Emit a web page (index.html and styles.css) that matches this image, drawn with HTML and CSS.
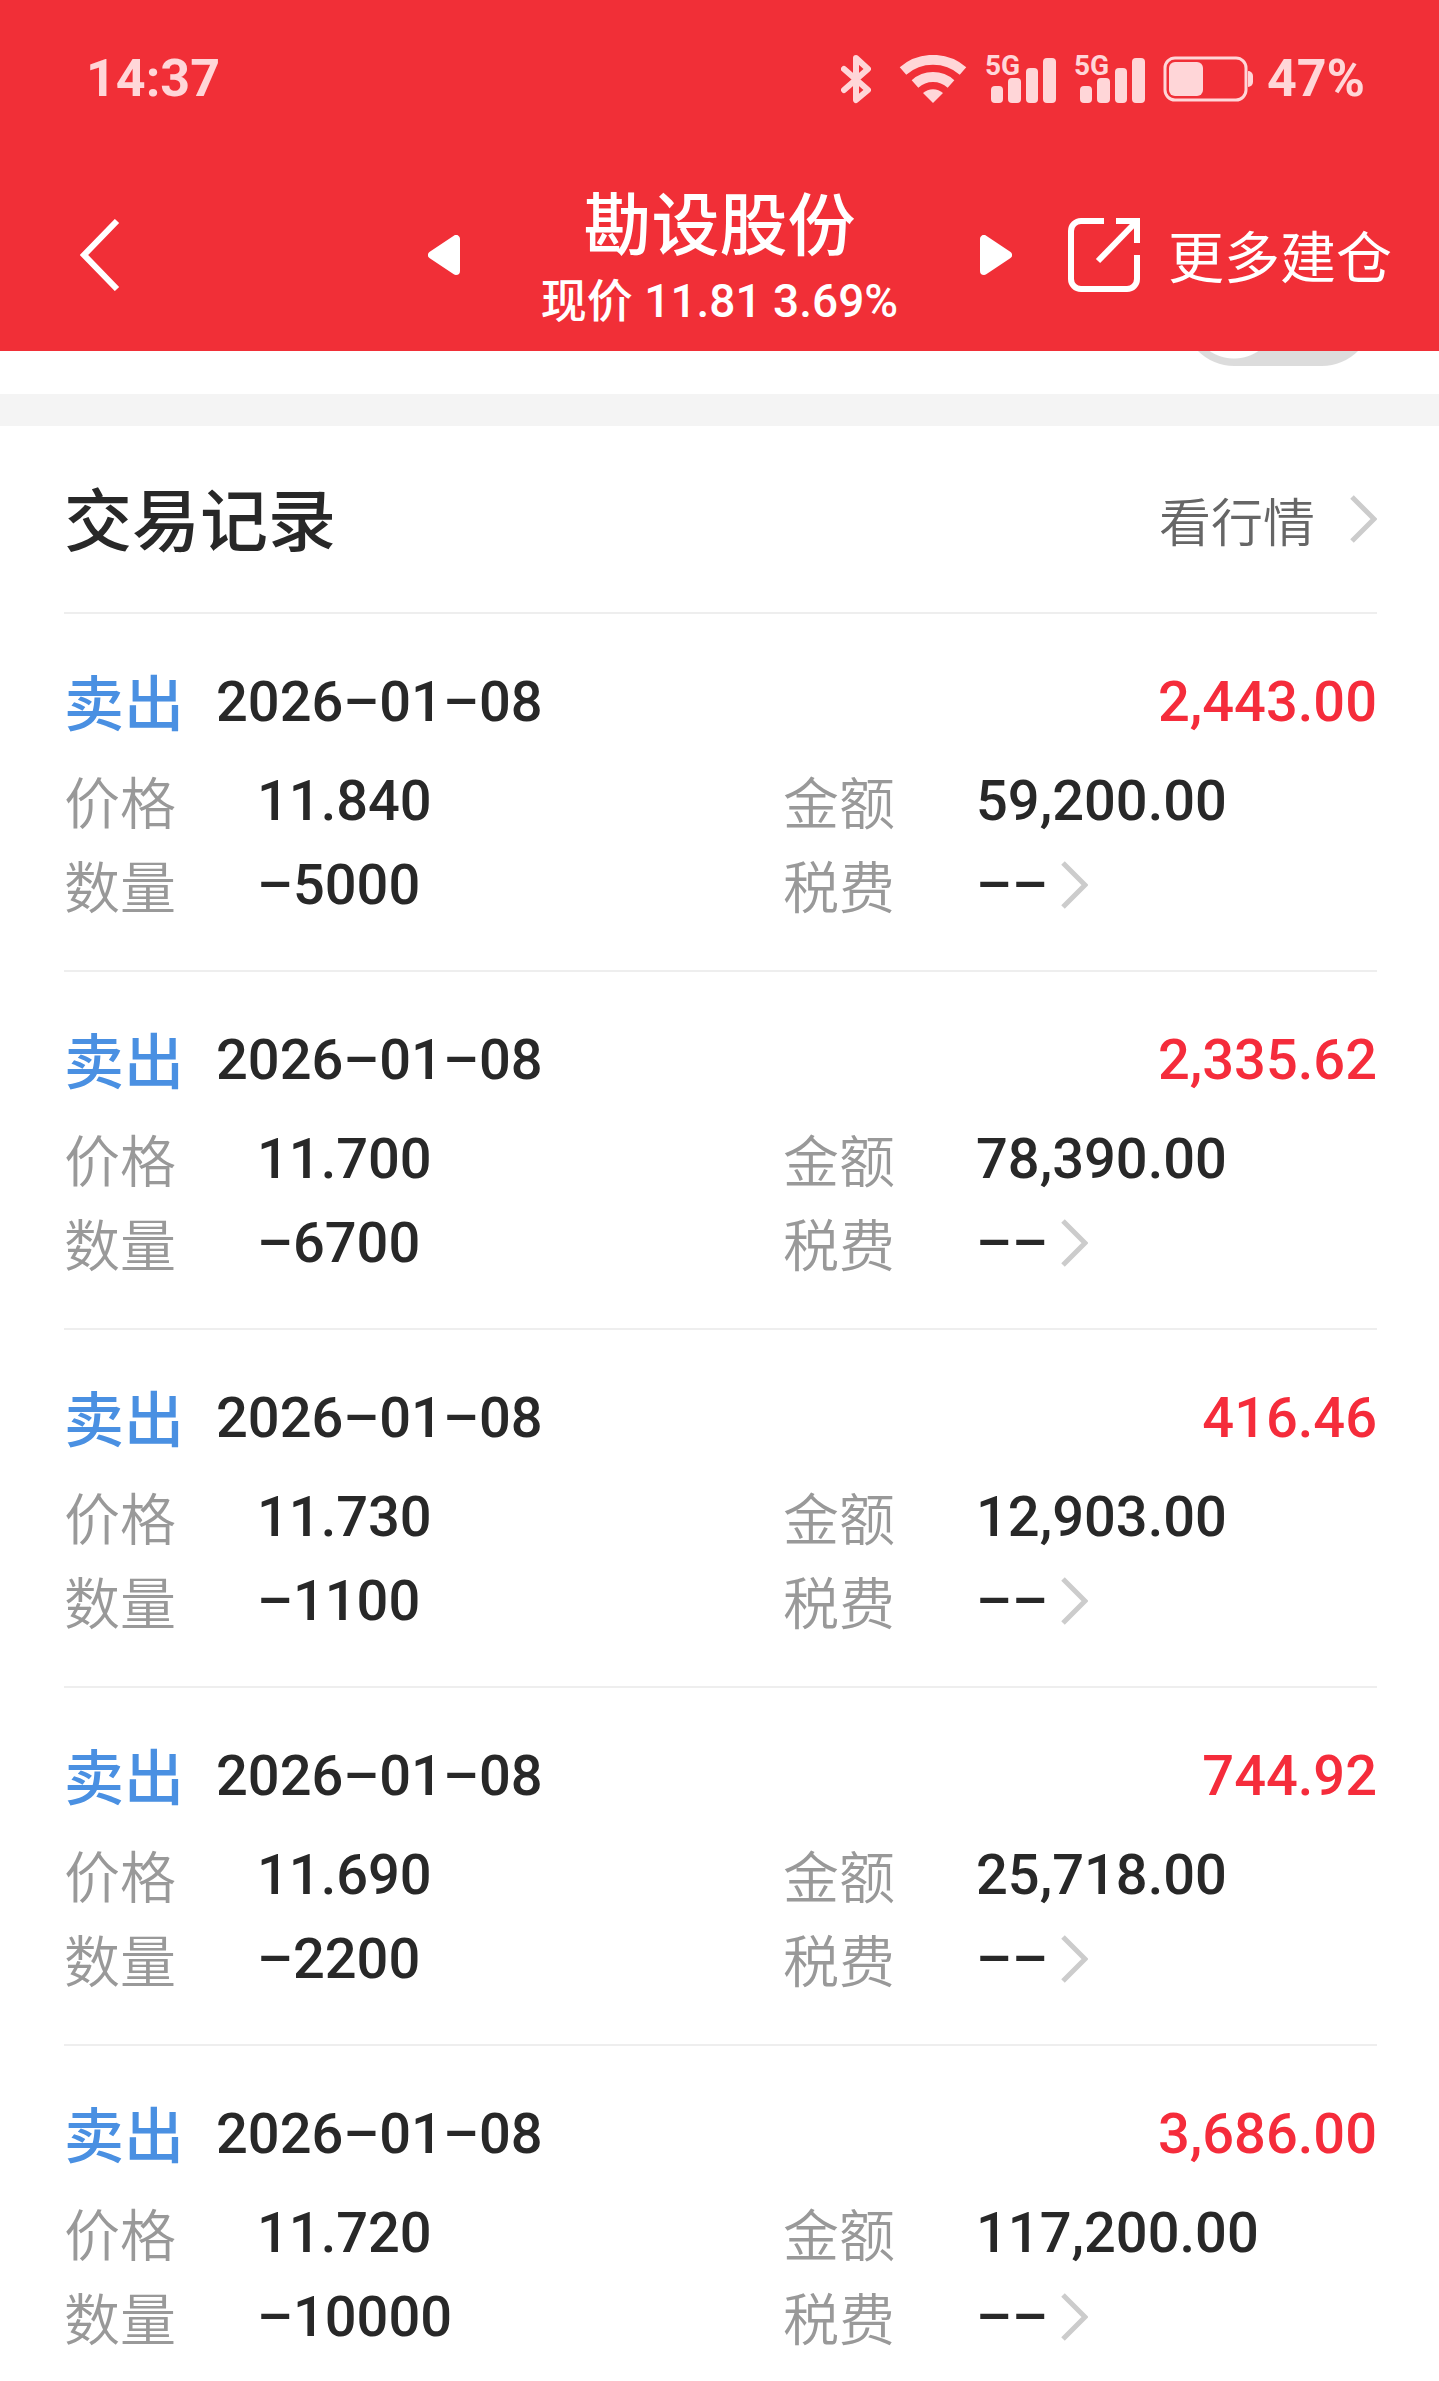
FILE: index.html
```html
<!DOCTYPE html>
<html lang="zh-CN">
<head>
  <meta charset="UTF-8" />
  <meta name="viewport" content="width=device-width, initial-scale=1.0" />
  <title>勘设股份</title>
  <link rel="stylesheet" href="styles.css">
</head>
<body>

  <header>
    <div class="status-bar">
      <span class="clock">14:37</span>
      <div class="status-icons">
        <svg class="bluetooth" viewBox="0 0 30 50" width="30" height="50">
          <path d="M3 15 L27 36 L15 46 V4 L27 15 L3 36" />
        </svg>
        <svg class="wifi" viewBox="0 0 68 48" width="68" height="48">
          <path d="M4 16 A46 46 0 0 1 64 16" />
          <path d="M16 29 A27 27 0 0 1 52 29" />
          <path class="dot" d="M34 48 L24 38 A15 15 0 0 1 44 38 Z" />
        </svg>
        <svg class="signal" viewBox="0 -8 71 66" width="71" height="66">
          <text x="0" y="21">5G</text>
          <rect x="6" y="32" width="12" height="17" rx="4" />
          <rect x="23" y="24" width="13" height="25" rx="4" />
          <rect x="41" y="14" width="12" height="35" rx="4" />
          <rect x="58" y="4" width="13" height="45" rx="4" />
        </svg>
        <svg class="signal" viewBox="0 -8 71 66" width="71" height="66">
          <text x="0" y="21">5G</text>
          <rect x="6" y="32" width="12" height="17" rx="4" />
          <rect x="23" y="24" width="13" height="25" rx="4" />
          <rect x="41" y="14" width="12" height="35" rx="4" />
          <rect x="58" y="4" width="13" height="45" rx="4" />
        </svg>
        <svg class="battery" viewBox="0 0 90 46" width="90" height="46">
          <rect class="case" x="2" y="2" width="81" height="42" rx="10" />
          <rect x="6" y="6" width="34" height="34" rx="6" />
          <path d="M85 15 A5 5 0 0 1 90 20 V26 A5 5 0 0 1 85 31 Z" />
        </svg>
        <span class="percent">47%</span>
      </div>
    </div>

    <nav class="title-bar">
      <button class="back" aria-label="返回">
        <svg viewBox="0 0 40 72" width="40" height="72"><path d="M37 2 L4 36 L37 70" /></svg>
      </button>
      <div class="switcher">
        <button aria-label="上一只">
          <svg viewBox="0 0 32 40" width="32" height="40"><path d="M28 4 V36 L4 20 Z" /></svg>
        </button>
        <div class="stock">
          <h1>勘设股份</h1>
          <p>现价 11.81 3.69%</p>
        </div>
        <button aria-label="下一只">
          <svg viewBox="0 0 32 40" width="32" height="40"><path d="M4 4 V36 L28 20 Z" /></svg>
        </button>
      </div>
      <a class="more" href="#">
        <svg viewBox="0 0 72 74" width="72" height="74">
          <path d="M36 3 H13 A10 10 0 0 0 3 13 V61 A10 10 0 0 0 13 71 H59 A10 10 0 0 0 69 61 V37" />
          <path d="M48 3 H69 V25" />
          <path d="M30 43 L68 4" />
        </svg>
        <span>更多建仓</span>
      </a>
    </nav>
  </header>

  <div class="toggle-row">
    <input type="checkbox" class="toggle" aria-label="开关">
  </div>

  <main>
    <div class="section-head">
      <h2>交易记录</h2>
      <a href="#">看行情
        <svg class="chevron" viewBox="0 0 28 48" width="28" height="48"><path d="M3 2 L25 24 L3 46" /></svg>
      </a>
    </div>
    <div id="records"></div>
  </main>

  <script>
    const records = [
      { date: "2026–01–08", profit: "2,443.00", price: "11.840", amount: "59,200.00", count: "–5000" },
      { date: "2026–01–08", profit: "2,335.62", price: "11.700", amount: "78,390.00", count: "–6700" },
      { date: "2026–01–08", profit: "416.46", price: "11.730", amount: "12,903.00", count: "–1100" },
      { date: "2026–01–08", profit: "744.92", price: "11.690", amount: "25,718.00", count: "–2200" },
      { date: "2026–01–08", profit: "3,686.00", price: "11.720", amount: "117,200.00", count: "–10000" },
    ];

    const list = document.getElementById("records");

    records.forEach(record => {
      const item = document.createElement("article");
      item.className = "record";
      item.innerHTML = `
        <div class="record-top">
          <span class="side">卖出</span>
          <span class="num">${record.date}</span>
          <span class="num profit">${record.profit}</span>
        </div>
        <dl>
          <div><dt>价格</dt><dd class="num">${record.price}</dd></div>
          <div><dt>金额</dt><dd class="num">${record.amount}</dd></div>
          <div><dt>数量</dt><dd class="num">${record.count}</dd></div>
          <div><dt>税费</dt><dd><button class="fee"><span class="num">––</span>
            <svg class="chevron" viewBox="0 0 28 48" width="28" height="48"><path d="M3 2 L25 24 L3 46" /></svg>
          </button></dd></div>
        </dl>
      `;
      list.appendChild(item);
    });
  </script>
</body>
</html>
```

FILE: styles.css
```css
* {
  box-sizing: border-box;
}

body {
  margin: 0;
  font-family: Roboto, "Noto Sans CJK SC", sans-serif;
  background-color: white;
  color: #282828;
}

h1, h2, p, dl, dd {
  margin: 0;
}

a {
  color: inherit;
  text-decoration: none;
}

button {
  display: flex;
  align-items: center;
  padding: 0;
  border: none;
  background: none;
  color: inherit;
  font: inherit;
  cursor: pointer;
}

svg {
  display: block;
  flex: none;
}

header {
  background-color: #f12f37;
  color: white;
}

.status-bar {
  display: flex;
  justify-content: space-between;
  align-items: center;
  height: 158px;
  padding: 0 74px 0 86px;
  color: #ffd6d8;
  font-size: 52px;
  font-weight: bold;
  line-height: 60px;
}

.status-icons {
  display: flex;
  align-items: center;
  gap: 18px;
}

.status-icons svg {
  fill: #ffd6d8;
}

.bluetooth path {
  fill: none;
  stroke: #ffd6d8;
  stroke-width: 6;
  stroke-linejoin: round;
  stroke-linecap: round;
}

.bluetooth {
  margin-right: 10px;
}

.wifi path {
  fill: none;
  stroke: #ffd6d8;
  stroke-width: 10;
}

.wifi .dot {
  fill: #ffd6d8;
  stroke: none;
}

.signal text {
  font-size: 28px;
  font-weight: bold;
}

.battery .case {
  fill: none;
  stroke: #ffd6d8;
  stroke-width: 3;
}

.percent {
  margin-left: -4px;
}

.title-bar {
  display: grid;
  grid-template-columns: 1fr 584px 1fr;
  align-items: center;
  height: 193px;
}

.back {
  padding-left: 80px;
}

.back path {
  fill: none;
  stroke: white;
  stroke-width: 6;
}

.switcher {
  display: flex;
  justify-content: space-between;
  align-items: center;
}

.switcher path {
  fill: white;
  stroke: white;
  stroke-width: 8;
  stroke-linejoin: round;
}

.stock {
  padding-top: 12px;
  text-align: center;
}

.stock h1 {
  font-size: 68px;
  font-weight: 500;
  line-height: 80px;
}

.stock p {
  font-size: 46px;
  font-weight: 500;
  line-height: 68px;
}

.more {
  display: flex;
  align-items: center;
  justify-content: flex-end;
  gap: 28px;
  padding-right: 47px;
  font-size: 56px;
  line-height: 72px;
  white-space: nowrap;
}

.more span {
  padding-top: 8px;
}

.more path {
  fill: none;
  stroke: white;
  stroke-width: 6;
}

/* the switch is scrolled partly under the header */
.toggle-row {
  display: flex;
  justify-content: flex-end;
  align-items: flex-end;
  height: 43px;
  padding: 0 66px 28px;
  overflow: hidden;
}

.toggle {
  appearance: none;
  flex: none;
  width: 190px;
  height: 102px;
  margin: 0;
  border-radius: 51px;
  background: radial-gradient(circle at 51px 51px, white 43px, #dcdcdc 44px);
}

main {
  border-top: 32px solid #f4f4f4;
  padding: 0 62px 0 64px;
}

.section-head {
  display: flex;
  justify-content: space-between;
  align-items: center;
  height: 186px;
}

.section-head h2 {
  padding-top: 8px;
  font-size: 68px;
  font-weight: 500;
  line-height: 80px;
}

.section-head a {
  display: flex;
  align-items: center;
  gap: 34px;
  color: #666;
  font-size: 52px;
  font-weight: 350;
}

.chevron path {
  fill: none;
  stroke: #ccc;
  stroke-width: 5;
}

.record {
  border-top: 2px solid #eee;
  padding: 43px 0;
}

.record:last-child {
  padding-bottom: 16px;
}

.record-top {
  display: flex;
  align-items: center;
  height: 90px;
  margin-bottom: 12px;
}

.side {
  width: 152px;
  padding-top: 8px;
  color: #4a90e2;
  font-size: 60px;
  font-weight: 500;
  line-height: 76px;
}

.num {
  font-size: 56px;
  font-weight: 500;
  line-height: 76px;
}

.profit {
  margin-left: auto;
  color: #f52c3b;
}

dl {
  display: grid;
  grid-template-columns: 23fr 19fr;
}

dl div {
  display: flex;
  align-items: center;
  height: 84px;
}

dt {
  width: 193px;
  padding-top: 8px;
  color: #999;
  font-size: 56px;
  font-weight: 350;
  line-height: 76px;
}

.fee {
  gap: 12px;
}
```
